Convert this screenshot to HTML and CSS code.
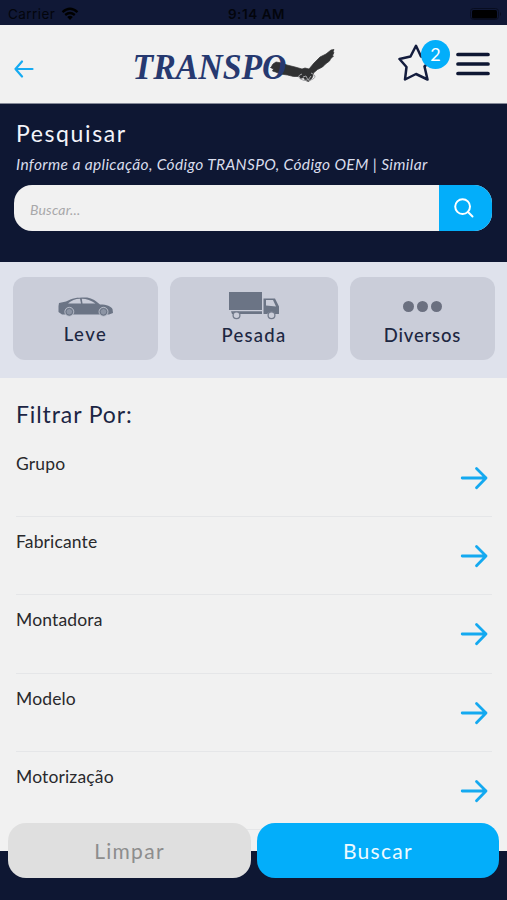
FILE: index.html
```html
<!DOCTYPE html>
<html lang="pt-BR">
<head>
<meta charset="utf-8">
<meta name="viewport" content="width=device-width, initial-scale=1">
<title>Transpo</title>
<link rel="stylesheet" href="styles.css">
</head>
<body>
<svg class="defs" width="0" height="0">
  <symbol id="arrow" viewBox="0 0 28 24"><path d="M2.2 12H26M16.5 2.4L26 12l-9.5 9.800" fill="none" stroke="currentColor" stroke-width="2.8" stroke-linecap="round" stroke-linejoin="round"/></symbol>
</svg>
<div class="app">
  <div class="status">
    <div class="carrier"><span>Carrier</span>
      <svg width="18" height="14" viewBox="0 0 18 14"><path d="M1.500 5.200Q9-1.600 16.500 5.200M4.200 8Q9 4 13.800 8" fill="none" stroke="#000" stroke-width="2.300"/><path d="M6.200 10Q9 7.600 11.800 10L9 13z"/></svg>
    </div>
    <span class="time">9:14 AM</span>
    <svg class="battery" width="32" height="12" viewBox="0 0 32 12"><rect x=".5" y=".5" width="28" height="11" rx="3" fill="none" stroke="#080d20"/><rect x="2" y="2" width="25" height="8.500" rx="1.500"/><path d="M30 4q2 2 0 4z" fill="#080d20"/></svg>
  </div>
  <header class="header">
    <svg class="back" width="20" height="18" viewBox="0 0 20 18"><path d="M18.500 9H1.500M8 1.500L1.500 9 8 16.500" fill="none" stroke="#16abf2" stroke-width="2.200" stroke-linecap="round" stroke-linejoin="round"/></svg>
    <svg class="logo" width="210" height="48" viewBox="0 0 210 48">
      <path d="M144 19l3-2 6 1 5 2 8 2 7 2 3-1 4 1 5-6 6-6 6-3 5-4 3-.5-1 2.500 1 .5-1.500 3 1 .5-3 3-1 2-4 3-3 3-5 2.500-4 3.500-1 4-2 3-2 1.500-3-1-2-3-3 1-1-2-6 0-6-1.500-7-1-5-2-3-1 1-2-3-1.500 1-1z" fill="#303132" stroke="#303132" stroke-width=".7"/>
      <g fill="none" stroke="#a4a5a8" stroke-width="1"><path d="M173 29q-6 2-1.500 5 3.500 2.500 7 1M182 28q7 3 2 6-3 2-5 1M174 32l3-1 2 4 3-4"/></g>
      <text x="3.500" y="34" textLength="154" lengthAdjust="spacingAndGlyphs" class="logo-text">TRANSPO</text>
    </svg>
    <div class="favorites">
      <svg width="36" height="38" viewBox="0 0 36 38"><path d="M18 1.800L23 12.500 35 14 26.500 22.500 29.500 35.500 18 30 7 35.500 8.500 23 1.500 15 12.500 12.500z" fill="none" stroke="#131c3d" stroke-width="2.500" stroke-linejoin="round"/></svg>
      <span class="count">2</span>
    </div>
    <svg class="menu" width="34" height="26" viewBox="0 0 34 26"><path d="M2 3.500H32M2 13H32M2 22.500H32" stroke="#0e1733" stroke-width="3.700" stroke-linecap="round"/></svg>
  </header>
  <section class="search">
    <h1>Pesquisar</h1>
    <p>Informe a aplicação, Código TRANSPO, Código OEM | Similar</p>
    <div class="field"><span class="placeholder">Buscar...</span>
      <div class="go"><svg width="20" height="20" viewBox="0 0 20 20"><circle cx="8.600" cy="8.600" r="7.400"/><path d="M14 14l4.500 4.500"/></svg></div>
    </div>
  </section>
  <nav class="types">
    <div class="type"><div class="icon car">
      <svg width="56" height="20" viewBox="0 0 56 20"><path fill="#6b7485" fill-rule="evenodd" d="M1 6L8 4.500C14 1 19 .4 27 .4c6 0 9 2 15 7 7 0 11 2 12.500 4.500L55 16l-4 1.500H4L.5 15V9zM10 6.500h13l-1-4.700q-7 0-12 4.700zM24.500 6.500h13Q31 1.800 23.800 1.800z"/><g fill="#8c94a4" stroke="#c0c4cf" stroke-width=".8"><circle cx="11.300" cy="14.800" r="4.500"/><circle cx="45.500" cy="14.800" r="4.500"/></g><g fill="none" stroke="#6b7485"><circle cx="11.300" cy="14.800" r="3.300"/><circle cx="45.500" cy="14.800" r="3.300"/></g></svg></div><span class="leve">Leve</span></div>
    <div class="type wide"><div class="icon truck">
      <svg width="52" height="28" viewBox="0 0 52 28"><path fill="#6b7485" fill-rule="evenodd" d="M1 0h33v18H1zM3 19.300h31V22H12q-3-3-6 0H4zM35.500 6.500H47l4 8V22h-4q-4-4-8 0h-3.500zM38 8v5.500l10 1-3-6.500z"/><g fill="#cacdd9" stroke="#737b8c" stroke-width="1.300"><circle cx="8.500" cy="23.200" r="3.400"/><circle cx="43.500" cy="23.200" r="3.400"/></g></svg></div><span class="lower">Pesada</span></div>
    <div class="type"><div class="icon dots"><i></i><i></i><i></i></div><span class="lower diversos">Diversos</span></div>
  </nav>
  <main class="filters">
    <h2>Filtrar Por:</h2>
    <div class="row"><span>Grupo</span><svg class="next"><use href="#arrow"/></svg></div>
    <div class="row"><span>Fabricante</span><svg class="next"><use href="#arrow"/></svg></div>
    <div class="row"><span>Montadora</span><svg class="next"><use href="#arrow"/></svg></div>
    <div class="row"><span>Modelo</span><svg class="next"><use href="#arrow"/></svg></div>
    <div class="row"><span>Motorização</span><svg class="next"><use href="#arrow"/></svg></div>
  </main>
  <footer class="actions"><div class="btn clear">Limpar</div><div class="btn submit">Buscar</div></footer>
</div>
</body>
</html>
```

FILE: styles.css
```css
* { box-sizing: border-box; }
body { margin: 0; font-family: Lato, "Open Sans", sans-serif; background: #0e1733; }
.defs { display: block; }
.app { position: relative; width: 507px; height: 900px; overflow: hidden; display: flex; flex-direction: column; }
svg { display: block; flex: none; }
h1, h2, p { margin: 0; font-weight: 400; white-space: nowrap; }

.status { height: 25px; flex: none; display: grid; grid-template-columns: 1fr auto 1fr; align-items: center; padding: 3px 5px 0 8px; background: #101836; color: #03050c; font: 13.5px/20px Inter, sans-serif; }
.carrier { display: flex; gap: 6px; align-items: center; letter-spacing: .45px; }
.time { font-weight: 600; letter-spacing: .55px; margin-left: 3px; }
.battery { justify-self: end; }

.header { height: 79px; flex: none; display: flex; background: #f1f1f1; border-bottom: 1px solid #858a98; }
.back { margin: 35px 0 0 14px; }
.logo { margin: 20px 0 0 95px; overflow: visible; }
.logo-text { font: italic 700 35px "Liberation Serif", serif; fill: #263970; }
.favorites { position: relative; margin: 19px 0 0 58.500px; }
.count { position: absolute; left: 23.500px; top: -4px; width: 29px; height: 29px; border-radius: 50%; background: #03aefa; color: #fff; font-size: 18px; line-height: 28px; text-align: center; }
.menu { margin: 26px 0 0 22.500px; }

.search { height: 158px; flex: none; background: #0e1733; padding: 15px 15px 0 14px; }
h1 { margin-left: 2px; color: #f3f4fa; font-size: 23px; line-height: 28px; letter-spacing: 1.6px; }
.search p { margin-left: 2px; margin-top: 6px; color: #d9ddec; font-size: 15.500px; line-height: 22px; font-style: italic; letter-spacing: .37px; }
.field { margin-top: 10px; height: 46px; display: flex; justify-content: space-between; border-radius: 18px; overflow: hidden; background: #f1f1f1; }
.placeholder { padding-left: 16px; line-height: 49px; color: #a8a8aa; font-size: 14px; font-style: italic; letter-spacing: .2px; }
.go { width: 53px; background: #03aefa; padding: 13px 0 0 15px; }
.go svg { fill: none; stroke: #fff; stroke-width: 2; stroke-linecap: round; }

.types { height: 116px; flex: none; background: #dfe2ec; padding: 15px 12px 0 13px; display: flex; gap: 12px; }
.type { width: 145px; height: 83px; border-radius: 12px; background: #cacdd9; display: flex; flex-direction: column; align-items: center; color: #1d2742; font-size: 18.5px; letter-spacing: 1.3px; font-weight: 500; }
.type.wide { width: 168px; }
.type span { line-height: 24px; }
.type .diversos { letter-spacing: .8px; }
.type .leve { letter-spacing: 1.5px; }
.icon { height: 45px; display: flex; }
.car { padding-top: 20px; }
.truck { padding-top: 15px; }
.truck svg { margin-right: 1px; }
.dots { padding-top: 24px; gap: 3px; }
.dots i { width: 11px; height: 11px; border-radius: 50%; background: #6b7080; }
.type .lower { margin-top: 1px; }

.filters { height: 473px; flex: none; background: #f1f1f1; padding: 22px 15px 0 16px; }
h2 { color: #1c2544; font-size: 23px; line-height: 29px; letter-spacing: .9px; height: 39px; }
.row { height: 78.2px; display: flex; justify-content: space-between; border-bottom: 1px solid #e5e6e8; color: #29292c; font-size: 17.500px; line-height: 24px; letter-spacing: .15px; padding: 13px 4px 0 0; }
.next { width: 28px; height: 24px; margin-top: 14px; color: #14a9f0; }
.actions { position: absolute; left: 8px; right: 8px; bottom: 22px; display: flex; gap: 6px; }
.btn { width: 243px; height: 55px; border-radius: 18px; font-size: 21px; line-height: 56px; letter-spacing: 1.3px; text-align: center; }
.clear { background: #dfdfdf; color: #8d8d8d; }
.submit { width: 242px; background: #03aefa; color: #eefaff; }
```
